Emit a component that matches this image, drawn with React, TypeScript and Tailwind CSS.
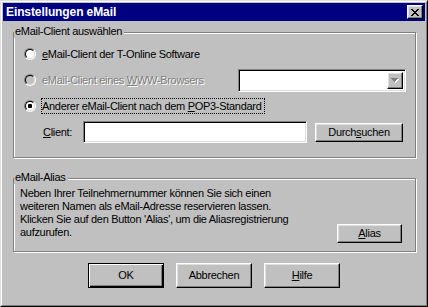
import type { ReactNode } from "react";

const raised =
  "border border-t-white border-l-white border-b-black border-r-black shadow-[inset_-1px_-1px_0_#808080,inset_1px_1px_0_#dfdfdf]";
const sunken =
  "border border-t-[#808080] border-l-[#808080] border-b-white border-r-white shadow-[inset_1px_1px_0_#000,inset_-1px_-1px_0_#dfdfdf]";
const etched =
  "border border-[#808080] shadow-[inset_1px_1px_0_#fff,1px_1px_0_#fff]";

function Radio({ checked = false, disabled = false }: { checked?: boolean; disabled?: boolean }) {
  return (
    <div className="w-[12px] h-[12px] shrink-0 rounded-full border border-t-[#808080] border-l-[#808080] border-b-white border-r-white">
      <div
        className={`w-full h-full rounded-full border border-t-black border-l-black border-b-[#dfdfdf] border-r-[#dfdfdf] flex items-center justify-center ${
          disabled ? "bg-[#c0c0c0]" : "bg-white"
        }`}
      >
        {checked && <div className="w-[4px] h-[4px] rounded-[1px] bg-black" />}
      </div>
    </div>
  );
}

function Button({
  children,
  className = "",
  isDefault = false,
}: {
  children: ReactNode;
  className?: string;
  isDefault?: boolean;
}) {
  const frame = isDefault
    ? "border border-black shadow-[inset_1px_1px_0_#fff,inset_-1px_-1px_0_#000,inset_-2px_-2px_0_#808080]"
    : raised;
  return (
    <div className={`flex items-center justify-center bg-[#c0c0c0] leading-none ${frame} ${className}`}>
      {children}
    </div>
  );
}

function Group({
  label,
  className = "",
  children,
}: {
  label: string;
  className?: string;
  children: ReactNode;
}) {
  return (
    <div className={`relative ml-[10px] w-[403px] ${etched} ${className}`}>
      <span className="absolute left-0 top-[-8px] bg-[#c0c0c0] pl-[1px] pr-[2px] leading-[13px]">
        {label}
      </span>
      {children}
    </div>
  );
}

export default function App() {
  return (
    <div className="w-[428px] h-[307px] bg-[#c0c0c0] border border-t-[#dfdfdf] border-l-[#dfdfdf] border-b-black border-r-black font-['Liberation_Sans',Arial,sans-serif] text-[11px] tracking-[-0.3px] text-black">
      <div className="h-full border border-t-white border-l-white border-b-[#808080] border-r-[#808080] p-px flex flex-col">
        {/* caption */}
        <div className="h-[18px] shrink-0 bg-[#000080] flex items-center justify-between pl-[3px] pr-[2px]">
          <span className="text-white font-bold text-[12px] tracking-[-0.1px] leading-none">
            Einstellungen eMail
          </span>
          <Button className="w-[16px] h-[14px]">
            <svg width="8" height="7" viewBox="0 0 8 7" shapeRendering="crispEdges" className="mr-px">
              <rect x="0" y="0" width="2" height="1" />
              <rect x="6" y="0" width="2" height="1" />
              <rect x="1" y="1" width="2" height="1" />
              <rect x="5" y="1" width="2" height="1" />
              <rect x="2" y="2" width="4" height="1" />
              <rect x="3" y="3" width="2" height="1" />
              <rect x="2" y="4" width="4" height="1" />
              <rect x="1" y="5" width="2" height="1" />
              <rect x="5" y="5" width="2" height="1" />
              <rect x="0" y="6" width="2" height="1" />
              <rect x="6" y="6" width="2" height="1" />
            </svg>
          </Button>
        </div>

        {/* eMail-Client */}
        <Group label="eMail-Client auswählen" className="mt-[11px] h-[126px] pt-[8px] pl-[10px]">
          <div className="h-[26px] flex items-center">
            <Radio />
            <span className="ml-[5px] border border-transparent leading-[14px]">
              <u>e</u>Mail-Client der T-Online Software
            </span>
          </div>
          <div className="h-[26px] flex items-center">
            <Radio disabled />
            <span className="ml-[5px] w-[197px] border border-transparent leading-[14px] text-[#808080] [text-shadow:1px_1px_0_#fff]">
              eMail-Client eines <u>W</u>WW-Browsers
            </span>
            <div className={`w-[168px] h-[23px] bg-white flex items-center justify-end pr-[2px] ${sunken}`}>
              <Button className="w-[16px] h-[17px]">
                <svg width="8" height="5" viewBox="0 0 8 5" shapeRendering="crispEdges">
                  <g fill="#fff">
                    <rect x="1" y="1" width="7" height="1" />
                    <rect x="2" y="2" width="5" height="1" />
                    <rect x="3" y="3" width="3" height="1" />
                    <rect x="4" y="4" width="1" height="1" />
                  </g>
                  <g fill="#808080">
                    <rect x="0" y="0" width="7" height="1" />
                    <rect x="1" y="1" width="5" height="1" />
                    <rect x="2" y="2" width="3" height="1" />
                    <rect x="3" y="3" width="1" height="1" />
                  </g>
                </svg>
              </Button>
            </div>
          </div>
          <div className="h-[26px] flex items-center">
            <Radio checked />
            <span className="ml-[5px] w-[224px] border border-dotted border-black leading-[14px]">
              Anderer eMail-Client nach dem <u>P</u>OP3-Standard
            </span>
          </div>
          <div className="h-[26px] flex items-center">
            <span className="ml-[19px] w-[40px]">
              <u>C</u>lient:
            </span>
            <div className={`w-[224px] h-[22px] bg-white ${sunken}`} />
            <Button className="ml-[8px] w-[88px] h-[19px]">
              Durch<u>s</u>uchen
            </Button>
          </div>
        </Group>

        {/* eMail-Alias */}
        <Group label="eMail-Alias" className="mt-[20px] h-[74px] pt-[8px] pl-[6px] pr-[13px] pb-[8px] flex items-end justify-between">
          <p className="self-start leading-[13px]">
            Neben Ihrer Teilnehmernummer können Sie sich einen
            <br />
            weiteren Namen als eMail-Adresse reservieren lassen.
            <br />
            Klicken Sie auf den Button 'Alias', um die Aliasregistrierung
            <br />
            aufzurufen.
          </p>
          <Button className="w-[65px] h-[19px] shrink-0">
            <u>A</u>lias
          </Button>
        </Group>

        {/* dialog buttons */}
        <div className="mt-[11px] flex justify-center gap-[12px]">
          <Button isDefault className="w-[76px] h-[25px]">
            OK
          </Button>
          <Button className="w-[76px] h-[25px]">Abbrechen</Button>
          <Button className="w-[76px] h-[25px]">
            <u>H</u>ilfe
          </Button>
        </div>
      </div>
    </div>
  );
}
